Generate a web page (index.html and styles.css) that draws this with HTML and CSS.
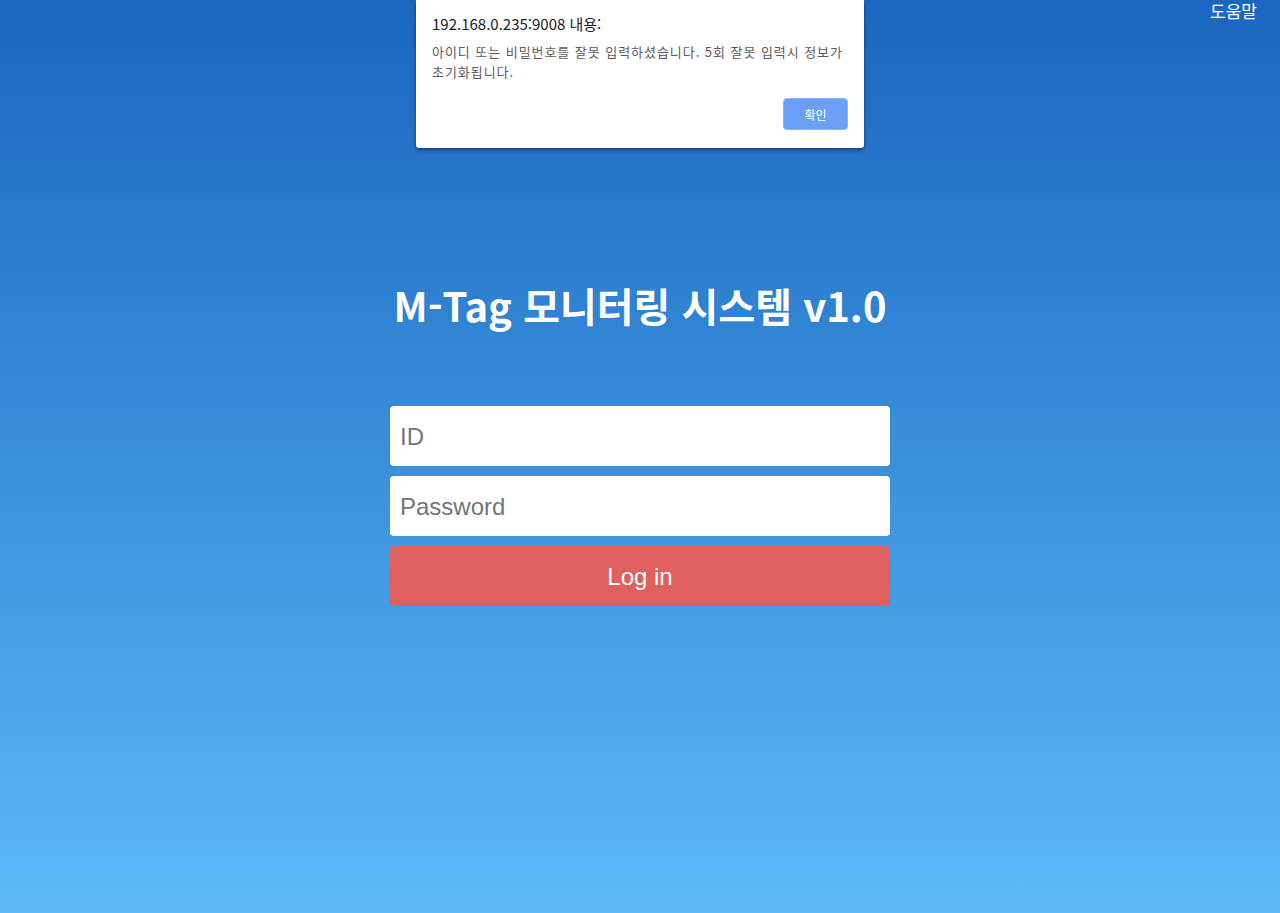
FILE: index.html
```html
<!DOCTYPE html>
<html lang="ko">
<head>
<meta charset="utf-8">
<title>M-Tag 모니터링 시스템</title>
<link rel="stylesheet" href="styles.css">
</head>
<body>
<div class="page">
  <div class="topbar"><a class="help" href="#">도움말</a></div>
  <main class="login">
    <h1 class="title">M-Tag 모니터링 시스템 v1.0</h1>
    <form class="form">
      <input class="field" type="text" placeholder="ID">
      <input class="field" type="password" placeholder="Password">
      <button class="submit" type="button">Log in</button>
    </form>
  </main>
</div>
<div class="alert">
  <div class="alert-title">192.168.0.235:9008 내용:</div>
  <div class="alert-msg">아이디 또는 비밀번호를 잘못 입력하셨습니다. 5회 잘못 입력시 정보가 초기화됩니다.</div>
  <div class="alert-actions"><button class="alert-ok" type="button">확인</button></div>
</div>
</body>
</html>
```
FILE: styles.css
```css
html, body {
  margin: 0;
  padding: 0;
  height: 100%;
}
body {
  font-family: "Noto Sans CJK KR", "Noto Sans", sans-serif;
  background: linear-gradient(to bottom, #1a66c0 0%, #3a8fdb 50%, #5eb9f6 100%);
  min-height: 913px;
  overflow: hidden;
}
.page {
  display: flex;
  flex-direction: column;
  min-height: 913px;
}
.topbar {
  display: flex;
  justify-content: flex-end;
  padding: 0 23px 0 0;
  height: 24px;
}
.help {
  color: #fff;
  text-decoration: none;
  font-size: 17px;
  line-height: 21px;
}
.login {
  display: flex;
  flex-direction: column;
  align-items: center;
}
.title {
  margin: 252px 0 0;
  color: #fff;
  font-size: 40px;
  font-weight: 700;
  line-height: 58px;
}
.form {
  margin-top: 72px;
  width: 500px;
  display: flex;
  flex-direction: column;
  gap: 10px;
}
.field {
  box-sizing: border-box;
  height: 60px;
  width: 100%;
  border: none;
  border-radius: 4px;
  background: #fff;
  padding: 2px 10px 0;
  font-family: "Liberation Sans", Arial, sans-serif;
  font-size: 24px;
  color: #333;
  outline: none;
}
.field::placeholder {
  color: #757575;
}
.submit {
  height: 60px;
  border: none;
  border-radius: 4px;
  background: #e06060;
  color: #fff;
  font-family: "Liberation Sans", Arial, sans-serif;
  font-size: 24px;
  padding-top: 2px;
  cursor: pointer;
}
.alert {
  position: absolute;
  top: 0;
  left: 416px;
  width: 448px;
  box-sizing: border-box;
  background: #fff;
  border-radius: 0 0 3px 3px;
  box-shadow: 0 2px 4px rgba(0, 0, 0, 0.45);
  padding: 14px 16px 18px;
}
.alert-title {
  color: #202124;
  font-size: 15px;
  line-height: 20px;
}
.alert-msg {
  margin-top: 8px;
  color: #5f5a5a;
  font-size: 13px;
  line-height: 20px;
  word-break: keep-all;
  letter-spacing: 0.95px;
}
.alert-actions {
  display: flex;
  justify-content: flex-end;
  margin-top: 16px;
}
.alert-ok {
  width: 65px;
  height: 32px;
  box-sizing: border-box;
  background: #6aa0f8;
  border: 1px solid #8ab4f8;
  border-radius: 4px;
  color: #fff;
  font-family: "Noto Sans CJK KR", sans-serif;
  font-size: 12px;
}
```
